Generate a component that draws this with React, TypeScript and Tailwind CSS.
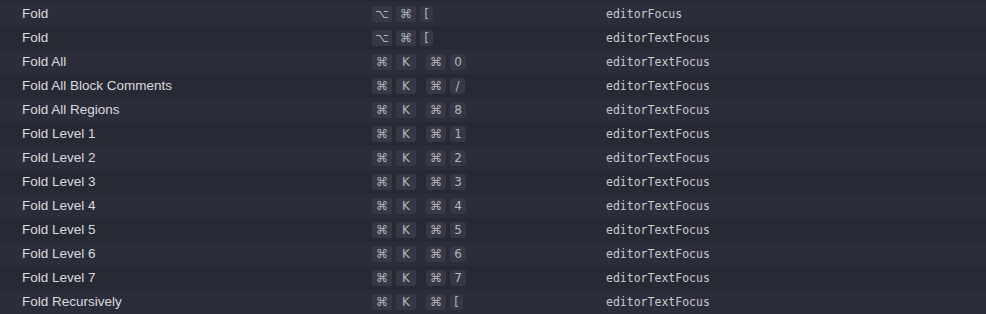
const rows: { label: string; keys: string[][]; when: string }[] = [
  { label: 'Fold', keys: [['⌥', '⌘', '[']], when: 'editorFocus' },
  { label: 'Fold', keys: [['⌥', '⌘', '[']], when: 'editorTextFocus' },
  { label: 'Fold All', keys: [['⌘', 'K'], ['⌘', '0']], when: 'editorTextFocus' },
  { label: 'Fold All Block Comments', keys: [['⌘', 'K'], ['⌘', '/']], when: 'editorTextFocus' },
  { label: 'Fold All Regions', keys: [['⌘', 'K'], ['⌘', '8']], when: 'editorTextFocus' },
  { label: 'Fold Level 1', keys: [['⌘', 'K'], ['⌘', '1']], when: 'editorTextFocus' },
  { label: 'Fold Level 2', keys: [['⌘', 'K'], ['⌘', '2']], when: 'editorTextFocus' },
  { label: 'Fold Level 3', keys: [['⌘', 'K'], ['⌘', '3']], when: 'editorTextFocus' },
  { label: 'Fold Level 4', keys: [['⌘', 'K'], ['⌘', '4']], when: 'editorTextFocus' },
  { label: 'Fold Level 5', keys: [['⌘', 'K'], ['⌘', '5']], when: 'editorTextFocus' },
  { label: 'Fold Level 6', keys: [['⌘', 'K'], ['⌘', '6']], when: 'editorTextFocus' },
  { label: 'Fold Level 7', keys: [['⌘', 'K'], ['⌘', '7']], when: 'editorTextFocus' },
  { label: 'Fold Recursively', keys: [['⌘', 'K'], ['⌘', '[']], when: 'editorTextFocus' },
]

// keycap widths roughly follow the glyph
function capWidth(k: string) {
  if (k === '[') return 'w-[13px]'
  if (k === '/') return 'w-[15px]'
  if (/[0-9]/.test(k)) return 'w-4'
  return 'w-5'
}

function Key({ k }: { k: string }) {
  return (
    <span
      className={`flex h-4 shrink-0 ${capWidth(k)} items-center justify-center rounded-[3px] bg-[#363845] text-[12px] leading-none text-[#b4b6bd]`}
      style={{ fontFamily: '"DejaVu Sans", sans-serif' }}
    >
      {k}
    </span>
  )
}

export default function App() {
  return (
    <div className="h-[314px] w-[986px] overflow-hidden bg-[#272935] pt-[2px]">
      {rows.map((r, i) => (
        <div
          key={i}
          className={`flex h-6 items-center ${i % 2 === 0 ? 'bg-[#2b2d3a]' : 'bg-[#272935]'}`}
        >
          <div
            className="w-[372px] shrink-0 pl-[22px] pt-px text-[13.5px] text-[#dadbdf]"
            style={{ fontFamily: '"Liberation Sans", Arial, sans-serif' }}
          >
            {r.label}
          </div>
          <div className="flex w-[234px] shrink-0 items-center gap-2.5">
            {r.keys.map((chord, j) => (
              <div key={j} className="flex items-center gap-1">
                {chord.map((k, m) => (
                  <Key key={m} k={k} />
                ))}
              </div>
            ))}
          </div>
          <div
            className="pt-px text-[11.5px] text-[#c8c9ce]"
            style={{ fontFamily: '"DejaVu Sans Mono", monospace' }}
          >
            {r.when}
          </div>
        </div>
      ))}
    </div>
  )
}
